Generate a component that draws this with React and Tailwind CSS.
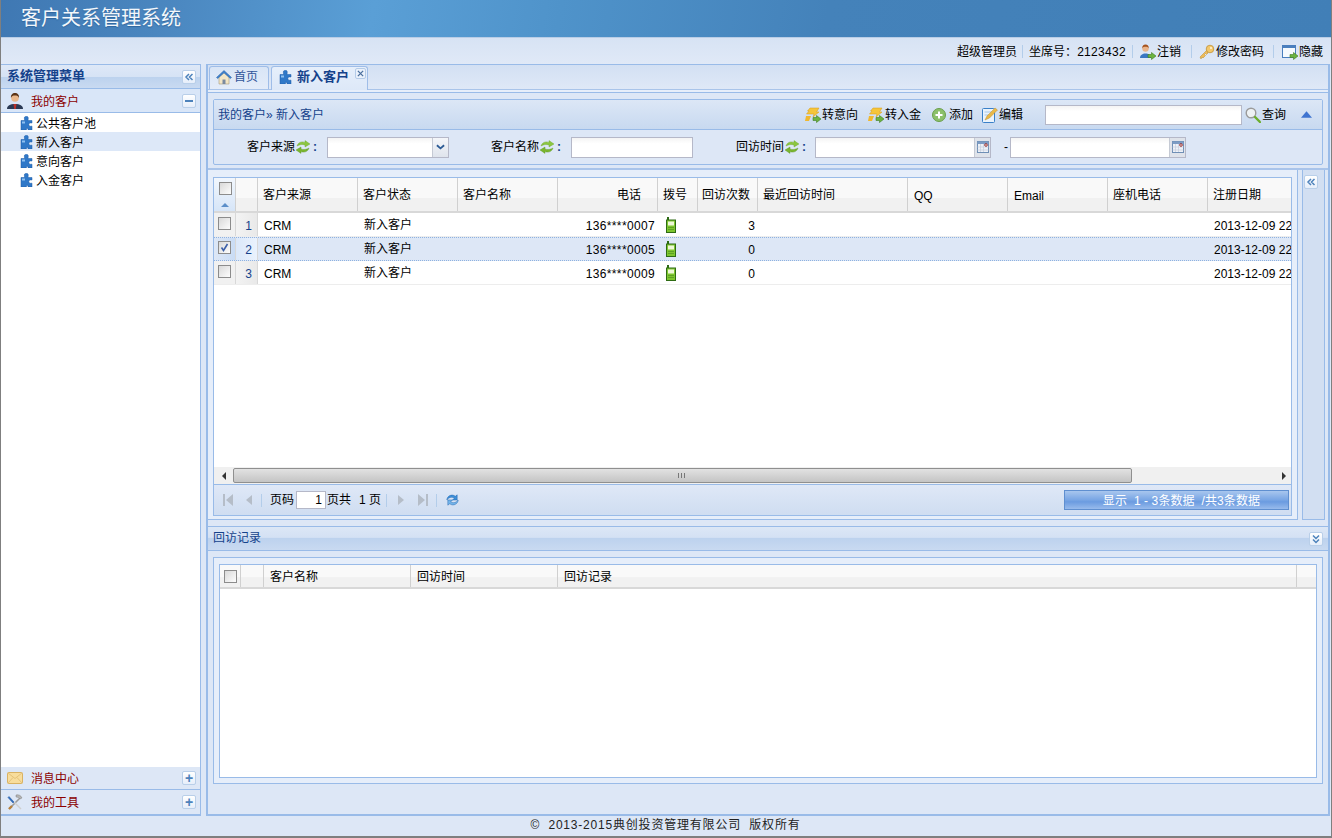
import React from 'react';

const columns = [
    { label: '客户来源', width: 'w-[100px]' },
    { label: '客户状态', width: 'w-[100px]' },
    { label: '客户名称', width: 'w-[100px]' },
    { label: '电话', width: 'w-[100px]', head: 'justify-end pr-[16px]' },
    { label: '拨号', width: 'w-[40px]' },
    { label: '回访次数', width: 'w-[60px]', head: 'pl-[4px]' },
    { label: '最近回访时间', width: 'w-[150px]' },
    { label: 'QQ', width: 'w-[100px]', head: 'pl-[6px] pt-[2px]' },
    { label: 'Email', width: 'w-[100px]', head: 'pl-[6px] pt-[2px]' },
    { label: '座机电话', width: 'w-[100px]' },
    { label: '注册日期', width: 'w-[100px]' },
];

const rows = [
    { no: 1, phone: '136****0007', visits: 3 },
    { no: 2, phone: '136****0005', visits: 0, selected: true },
    { no: 3, phone: '136****0009', visits: 0 },
];

const menuItems = [
    { label: '公共客户池' },
    { label: '新入客户', active: true },
    { label: '意向客户' },
    { label: '入金客户' },
];

const Puzzle = ({ className = 'w-[14px] h-[14px]' }) => (
    <svg viewBox="0 0 14 14" className={`shrink-0 ${className}`}>
        <path d="M1 4.500h3.500V3a2 2 0 1 1 3.600 0v1.500H12V7h-.9a1.700 1.700 0 1 0 0 3.200h.9V14H8v-1.600H6.400V14H1z" fill="#2f78c8" stroke="#1c5aa6" strokeWidth=".5" />
        <path d="M2 5.500h3v2H2z" fill="#8fc0f0" />
    </svg>
);

const Swap = () => (
    <svg viewBox="0 0 16 16" className="w-[16px] h-[16px] shrink-0">
        <path d="M2 7c1-3.500 4.500-5 8-3.600V1.600L15 5l-5 3V6C7.500 5 4.500 5.500 2 7z" fill="#8cc63f" stroke="#6aa52a" strokeWidth=".4" />
        <path d="M14 9c-1 3.500-4.500 5-8 3.600v1.800L1 11l5-3v2c2.500 1 5.500.5 8-1z" fill="#7ab52e" stroke="#5c9420" strokeWidth=".4" />
    </svg>
);

const BlueRefresh = () => (
    <svg viewBox="0 0 16 16" className="w-[15px] h-[16px] shrink-0">
        <path d="M2 8c0-4 5-7 9-4l2-1.500V8H8l2-2C7.500 4.500 4 5 2 8z" fill="#3d8fd8" stroke="#1e63ad" strokeWidth=".5" />
        <path d="M14 8c0 4-5 7-9 4l-2 1.500V8h5l-2 2c2.500 1.500 6 1 8-2z" fill="#74b5ea" stroke="#1e63ad" strokeWidth=".5" />
    </svg>
);

const GreenArrow = () => (
    <path d="M8 10.500h3.500V8.500L16 12l-4.500 3.500v-2H8z" fill="#6cb33f" stroke="#3f7d22" strokeWidth=".6" />
);

const Bolt = () => (
    <svg viewBox="0 0 16 16" className="w-[16px] h-[16px] shrink-0">
        <path d="M5 1h9l-2.500 4H14l-6 5 1-3H1.500L4 4H2.500z" fill="#f5c53a" stroke="#d99a16" strokeWidth=".5" />
        <path d="M1 9h5l-2 5H0z" fill="#f0b82e" />
        <GreenArrow />
    </svg>
);

const AddIcon = () => (
    <svg viewBox="0 0 14 14" className="w-[14px] h-[14px] shrink-0">
        <circle cx="7" cy="7" r="6.500" fill="#8cc06a" stroke="#6a9e4a" />
        <path d="M7 3.500v7M3.500 7h7" stroke="#fff" strokeWidth="2" />
    </svg>
);

const EditIcon = () => (
    <svg viewBox="0 0 16 16" className="w-[16px] h-[16px] shrink-0">
        <rect x=".5" y="1.500" width="12" height="14" rx="1" fill="#eaf3fc" stroke="#3a80c8" />
        <path d="M2.500 5h7M2.500 8h5" stroke="#a8c8e8" />
        <path d="M3 13l2-4 8-8 2.500 2-8 8z" fill="#e9b949" stroke="#b08224" strokeWidth=".4" />
    </svg>
);

const SearchIcon = () => (
    <svg viewBox="0 0 16 16" className="w-[16px] h-[16px] shrink-0">
        <circle cx="6" cy="6" r="4.800" fill="#eef2f4" stroke="#9a9a9a" strokeWidth="1.400" />
        <path d="M10 10l5 5" stroke="#6cae2c" strokeWidth="2.400" strokeLinecap="round" />
    </svg>
);

const CalendarIcon = () => (
    <svg viewBox="0 0 12 12" className="w-[12px] h-[12px]">
        <rect x=".5" y=".5" width="11" height="11" fill="#eef2f8" stroke="#6f8fb5" />
        <path d="M.5 .5h11v2.500H.5z" fill="#7d9cc4" />
        <path d="M3.500 3v8M6.500 3v8M.5 6h11M.5 9h11" stroke="#c6cfdc" strokeWidth=".7" />
        <circle cx="9" cy="4" r="1.300" fill="#fff" stroke="#8b1414" strokeWidth=".9" />
    </svg>
);

const PhoneIcon = () => (
    <svg viewBox="0 0 10 16" className="w-[10px] h-[16px] shrink-0">
        <path d="M1 0h2v3H1z" fill="#2c6a14" />
        <rect x=".5" y="3" width="9" height="12.500" fill="#7ec62e" stroke="#2e6b14" />
        <rect x="2" y="4.500" width="6" height="4" fill="#eef7d8" />
        <path d="M2.500 10.500h5M2.500 12.500h5" stroke="#3e7d1a" strokeDasharray="1 1" />
    </svg>
);

const HomeIcon = () => (
    <svg viewBox="0 0 16 16" className="w-[16px] h-[16px] shrink-0">
        <path d="M3 8v7h10V8L8 3.500z" fill="#f3e6c6" stroke="#a89a78" strokeWidth=".6" />
        <path d="M6.500 15v-4.500h3V15z" fill="#7a8aa0" />
        <path d="M.5 8.500L8 1.500l7.500 7-1.200 1L8 3.800 1.700 9.500z" fill="#3f82cf" stroke="#235c9f" strokeWidth=".5" />
    </svg>
);

const Avatar = () => (
    <svg viewBox="0 0 16 16" className="w-[16px] h-[16px] shrink-0">
        <path d="M0 16c0-3.500 3-5 8-5s8 1.500 8 5z" fill="#2b3a55" />
        <path d="M6.500 11h3L8.800 16H7.200z" fill="#b8322a" />
        <circle cx="8" cy="5" r="3.800" fill="#eab88c" />
        <path d="M4 5c-.5-3 1.500-5 4-5s4.500 2 4 5c-.5-2-2-2.500-4-2.500S4.500 3 4 5z" fill="#5b3316" />
    </svg>
);

const MailIcon = () => (
    <svg viewBox="0 0 16 12" className="w-[16px] h-[12px] shrink-0">
        <rect x=".5" y=".5" width="15" height="11" rx="1" fill="#f8dd9c" stroke="#d9b263" />
        <path d="M1 1l7 5.500L15 1M1 11l5-5.500M15 11l-5-5.500" fill="none" stroke="#e4c27a" />
    </svg>
);

const ToolsIcon = () => (
    <svg viewBox="0 0 16 16" className="w-[16px] h-[16px] shrink-0">
        <path d="M2 15L14 3" stroke="#9a9a9a" strokeWidth="1.600" />
        <path d="M9 1c2-.8 5 .2 6 3l-2 1-1.500-1.500L9 3z" fill="#b4b4b4" stroke="#777" strokeWidth=".4" />
        <path d="M14 15L7 8" stroke="#cfcfcf" strokeWidth="1.400" />
        <path d="M7 8L2 2.500 1 3.500 6 9z" fill="#2f6fc4" stroke="#1d4f95" strokeWidth=".5" />
        <path d="M2 15l3-3" stroke="#b9823d" strokeWidth="2.400" />
    </svg>
);

const KeyIcon = () => (
    <svg viewBox="0 0 16 16" className="w-[16px] h-[16px] shrink-0">
        <path d="M1 13l7-7 1 1-1 1 1 1-1.500 1.500-1-1-1 1 1 1L4 14l-1-1-1 2z" fill="#eebb58" stroke="#b98a2e" strokeWidth=".5" />
        <circle cx="11" cy="5" r="3.800" fill="#f3c86c" stroke="#b98a2e" strokeWidth=".7" />
        <circle cx="12" cy="4" r="1" fill="#fff6dc" />
    </svg>
);

const LogoutIcon = () => (
    <svg viewBox="0 0 16 16" className="w-[16px] h-[16px] shrink-0">
        <path d="M0 14c0-3 2.500-4.500 5.500-4.500S11 11 11 14z" fill="#3a76c2" />
        <circle cx="5.500" cy="4.500" r="3.200" fill="#e9b48a" />
        <path d="M2.300 4.500C2 2 3.500.5 5.500.5s3.500 1.500 3.200 4C8 3 7 2.800 5.500 2.800S3 3 2.300 4.500z" fill="#a5521c" />
        <GreenArrow />
    </svg>
);

const HideIcon = () => (
    <svg viewBox="0 0 16 16" className="w-[16px] h-[16px] shrink-0">
        <rect x=".5" y="1.500" width="13" height="12" fill="#f6fafe" stroke="#4a7fbe" />
        <path d="M.5 1.500h13V4H.5z" fill="#4a7fbe" />
        <GreenArrow />
    </svg>
);

const Sep = ({ className = 'mx-[6px]' }) => <span className={`w-px h-[13px] bg-[#b3cdea] shrink-0 ${className}`}></span>;

const BoxButton = ({ children }) => (
    <span className="flex items-center justify-center w-[14px] h-[14px] rounded-[2px] border border-[#b9cfe9] bg-[linear-gradient(#ffffff,#e6eefa)] text-[#4d82bb]">
        {children}
    </span>
);

const Chevrons = ({ down }) => (
    <svg viewBox="0 0 10 10" className="w-[10px] h-[10px]">
        {down
            ? <path d="M2 1.500l3 3 3-3M2 5.500l3 3 3-3" fill="none" stroke="currentColor" strokeWidth="1.500" />
            : <path d="M5 2L2 5l3 3M8.500 2l-3 3 3 3" fill="none" stroke="currentColor" strokeWidth="1.500" />}
    </svg>
);

const Check = ({ checked }) => (
    <span className="flex items-center justify-center w-[13px] h-[13px] border border-[#8c8c8c] bg-[linear-gradient(135deg,#d9d9d9,#fdfdfd)] shrink-0">
        {checked && (
            <svg viewBox="0 0 11 11" className="w-[11px] h-[11px]">
                <path d="M2.500 5.500l2 3 4-6.500" fill="none" stroke="#3b5fa8" strokeWidth="1.600" />
            </svg>
        )}
    </span>
);

const PagerArrow = ({ dir, bar }) => (
    <svg viewBox="0 0 10 12" className="w-[10px] h-[12px] shrink-0">
        {dir === 'left'
            ? <path d={bar ? 'M0 0h2v12H0zM10 0v12L3 6z' : 'M8 1v10L2 6z'} fill="#b5bdc8" />
            : <path d={bar ? 'M8 0h2v12H8zM0 0v12L7 6z' : 'M2 1v10l6-5z'} fill="#b5bdc8" />}
    </svg>
);

const FormLabel = ({ text, className }) => (
    <span className={`flex items-center ${className}`}>
        <span>{text}</span>
        <Swap />
        <span className="ml-[2px] text-[#15428b] font-bold">:</span>
    </span>
);

const CalendarInput = () => (
    <div className="flex h-[21px] w-[176px] border border-[#b5b8c8] bg-[linear-gradient(#f4f4f4,#ffffff_30%)]">
        <span className="flex-1"></span>
        <span className="flex items-center justify-center w-[16px] bg-[#dfe3ea] border-l border-[#c5cad4]">
            <CalendarIcon />
        </span>
    </div>
);

const ToolAction = ({ icon, label, className = 'gap-px' }) => (
    <span className={`flex items-center ${className}`}>
        {icon}
        <span>{label}</span>
    </span>
);

const GridHeaderCell = ({ className = '', children }) => (
    <div className={`flex items-center h-full border-r border-[#d0d0d0] shrink-0 ${className}`}>{children}</div>
);

const AccordionLabel = ({ icon, label }) => (
    <span className="flex items-center gap-[8px] text-[#8b0000]">
        {icon}
        <span className="pt-[2px]">{label}</span>
    </span>
);

export default function App() {
    return (
        <div className="w-[1332px] h-[838px] flex flex-col overflow-hidden bg-[#dde7f6] text-[12px] text-black font-['Liberation_Sans','Noto_Sans_CJK_SC',sans-serif] border-x border-[#7f7f7f]">
            {/* topo */}
            <div className="h-[37px] shrink-0 flex items-center pl-[21px] pb-[2px] -mx-px bg-[linear-gradient(100deg,#3f78b3_0%,#4a86bf_12%,#5a9fd6_28%,#4f93ca_42%,#4482ba_62%,#417fb7_100%)]">
                <span className="text-[20px] text-[#f3f7fb] [text-shadow:0_1px_1px_#2f659c]">客户关系管理系统</span>
            </div>
            <div className="h-px shrink-0 bg-[#b9cde6]"></div>

            <div className="h-[26px] shrink-0 flex items-center justify-end pr-[8px] pt-[1px] bg-[linear-gradient(#d7e3f4,#e0e9f7)]">
                <span>超级管理员</span>
                <Sep className="ml-[5px] mr-[6px]" />
                <span>坐席号：<span className="tracking-[0.3px]">2123432</span></span>
                <Sep className="ml-[6px] mr-[7px]" />
                <ToolAction icon={<LogoutIcon />} label="注销" />
                <Sep className="ml-[10px] mr-[7px]" />
                <ToolAction icon={<KeyIcon />} label="修改密码" />
                <Sep className="ml-[9px] mr-[8px]" />
                <ToolAction icon={<HideIcon />} label="隐藏" />
            </div>

            <div className="h-[752px] shrink-0 flex">
                {/* menu lateral */}
                <aside className="w-[200px] shrink-0 flex flex-col border border-[#99bbe8] border-l-0 border-b-2 bg-white">
                    <div className="h-[24px] shrink-0 flex items-center justify-between pl-[6px] pr-[4px] border-b border-[#99bbe8] bg-[linear-gradient(#dee8f7_0%,#d6e3f5_50%,#bcd2ee_52%,#c9daf1_100%)]">
                        <span className="pb-[2px] text-[13px] font-bold text-[#15428b]">系统管理菜单</span>
                        <BoxButton><Chevrons /></BoxButton>
                    </div>
                    <div className="h-[24px] shrink-0 flex items-center justify-between pl-[6px] pr-[4px] border-b border-[#99bbe8] bg-[#d9e6f8]">
                        <AccordionLabel icon={<Avatar />} label="我的客户" />
                        <BoxButton><span className="w-[8px] h-[2px] bg-[#4d82bb]"></span></BoxButton>
                    </div>
                    <ul className="flex-1">
                        {menuItems.map((item) => (
                            <li key={item.label} className={`h-[19px] flex items-center gap-[2px] pl-[19px] ${item.active ? 'bg-[#dde8f8]' : ''}`}>
                                <Puzzle />
                                <span className="pt-[3px]">{item.label}</span>
                            </li>
                        ))}
                    </ul>
                    <div className="h-[23px] shrink-0 flex items-center justify-between pl-[6px] pr-[4px] border-b border-[#99bbe8] bg-[#dde7f6]">
                        <AccordionLabel icon={<MailIcon />} label="消息中心" />
                        <BoxButton><span className="text-[14px] leading-none font-bold">+</span></BoxButton>
                    </div>
                    <div className="h-[24px] shrink-0 flex items-center justify-between pl-[6px] pr-[4px] bg-[#dde7f6]">
                        <AccordionLabel icon={<ToolsIcon />} label="我的工具" />
                        <BoxButton><span className="text-[14px] leading-none font-bold">+</span></BoxButton>
                    </div>
                </aside>

                {/* area principal */}
                <main className="w-[1124px] ml-[5px] shrink-0 flex flex-col border border-[#99bbe8] border-b-2 border-r-2 border-l-2 bg-[#dde7f6]">
                    <div className="h-[25px] shrink-0 flex items-end pl-[1px] gap-[2px] border-b border-[#a9c4ea] bg-[linear-gradient(#d3e0f3,#dfe8f7)]">
                        <div className="w-[60px] h-[23px] flex items-center gap-[2px] pl-[6px] pb-[2px] rounded-t-[3px] border border-b-0 border-[#9fbde8] bg-[linear-gradient(#d9e5f6,#e4ecf9)] text-[#30559a]">
                            <HomeIcon />
                            <span>首页</span>
                        </div>
                        <div className="relative w-[97px] h-[24px] -mb-px flex items-center gap-[4px] pl-[7px] pb-[3px] rounded-t-[3px] border border-b-0 border-[#9fbde8] bg-[linear-gradient(#e6effb,#dde8f8)] text-[13px] font-bold text-[#15428b]">
                            <Puzzle />
                            <span>新入客户</span>
                            <span className="absolute right-[1px] top-[1px] flex items-center justify-center w-[11px] h-[11px] rounded-[2px] border border-[#b4cbe8] bg-[#eaf1fb]">
                                <svg viewBox="0 0 8 8" className="w-[7px] h-[7px]"><path d="M1 1l6 6M7 1L1 7" stroke="#4a6f9e" strokeWidth="1.500" /></svg>
                            </span>
                        </div>
                    </div>
                    <div className="h-[3px] shrink-0 border-b border-[#99bbe8] bg-[#e6eefa]"></div>

                    {/* pesquisa */}
                    <div className="h-[77px] shrink-0 pt-[6px] px-[5px] pb-[2px] border-b-2 border-[#a9c4ea]">
                        <div className="h-[66px] w-[1110px] flex flex-col rounded-[2px] border border-[#99bbe8] bg-[#dde7f6]">
                            <div className="h-[30px] shrink-0 flex items-center pl-[4px] border-b border-[#99bbe8] bg-[linear-gradient(#dce7f6,#c8d9f0)]">
                                <span className="text-[#15428b]">我的客户» 新入客户</span>
                                <ToolAction icon={<Bolt />} label="转意向" className="ml-[481px] gap-px" />
                                <ToolAction icon={<Bolt />} label="转入金" className="ml-[10px] gap-px" />
                                <ToolAction icon={<AddIcon />} label="添加" className="ml-[11px] gap-[3px]" />
                                <ToolAction icon={<EditIcon />} label="编辑" className="ml-[9px] gap-px" />
                                <span className="ml-[22px] w-[197px] h-[20px] border border-[#b5b8c8] bg-[linear-gradient(#f4f4f4,#ffffff_30%)]"></span>
                                <ToolAction icon={<SearchIcon />} label="查询" className="ml-[3px] gap-px" />
                                <svg viewBox="0 0 12 7" className="ml-[15px] w-[11px] h-[7px]"><path d="M6 0l6 7H0z" fill="#3f74d0" /></svg>
                            </div>
                            <div className="flex-1 flex items-center">
                                <FormLabel text="客户来源" className="ml-[33px] w-[80px]" />
                                <div className="flex h-[21px] w-[122px] border border-[#b5b8c8] bg-[linear-gradient(#f4f4f4,#ffffff_30%)]">
                                    <span className="flex-1"></span>
                                    <span className="flex items-center justify-center w-[16px] bg-[linear-gradient(#f4f6fa,#dfe4ec)] border-l border-[#c5cad4]">
                                        <svg viewBox="0 0 10 6" className="w-[9px] h-[6px]"><path d="M1 1l4 3.500L9 1" fill="none" stroke="#2b5a94" strokeWidth="2" /></svg>
                                    </span>
                                </div>
                                <FormLabel text="客户名称" className="ml-[42px] w-[80px]" />
                                <span className="w-[122px] h-[21px] border border-[#b5b8c8] bg-[linear-gradient(#f4f4f4,#ffffff_30%)]"></span>
                                <FormLabel text="回访时间" className="ml-[43px] w-[79px]" />
                                <CalendarInput />
                                <span className="ml-[13px] w-[6px]">-</span>
                                <CalendarInput />
                            </div>
                        </div>
                    </div>

                    {/* grid + barra lateral */}
                    <div className="h-[350px] shrink-0 flex">
                        <div className="w-[1090px] h-[350px] shrink-0 pt-[7px] px-[5px] pb-[3px] border-r border-b border-[#99bbe8] bg-[#e6eefa]">
                            <div className="h-[339px] w-[1079px] flex flex-col border border-[#99bbe8] bg-white overflow-hidden">
                                <div className="h-[35px] shrink-0 flex border-b-2 border-[#d8d8d8] bg-[linear-gradient(#f9f9f9_0%,#f9f9f9_60%,#f1f1f1_62%,#f1f1f1_100%)] overflow-hidden">
                                    <div className="w-[22px] h-full shrink-0 flex flex-col items-center justify-between pt-[4px] pb-[4px] pl-px border-r border-[#d0d0d0] bg-[linear-gradient(#f2f7fd,#d6e5f8)]">
                                        <Check />
                                        <svg viewBox="0 0 8 4" className="w-[8px] h-[4px]"><path d="M4 0l4 4H0z" fill="#5b8ec9" /></svg>
                                    </div>
                                    <GridHeaderCell className="w-[22px]" />
                                    {columns.map((col) => (
                                        <GridHeaderCell key={col.label} className={`${col.width} ${col.head ?? 'pl-[5px]'}`}>
                                            {col.label}
                                        </GridHeaderCell>
                                    ))}
                                </div>
                                <div className="flex-1 min-h-0">
                                    {rows.map((row) => (
                                        <div
                                            key={row.no}
                                            className={`h-[24px] flex items-center overflow-hidden ${row.selected ? 'bg-[#dde7f6] border-y border-dotted border-[#8fb2e0]' : 'border-b border-[#ededed]'}`}
                                        >
                                            <span className={`w-[22px] h-full shrink-0 flex items-start justify-center border-r border-[#d8d8d8] ${row.selected ? 'pt-[3px] bg-[linear-gradient(90deg,#dde7f6,#c9dcf5)]' : 'pt-[4px] bg-[#f1f1f1]'}`}>
                                                <Check checked={row.selected} />
                                            </span>
                                            <span className={`w-[22px] h-full shrink-0 flex items-center justify-center pl-[4px] pt-[2px] border-r border-[#d8d8d8] text-[#15428b] ${row.selected ? 'bg-[linear-gradient(90deg,#dbe8fa,#eaf2fd)]' : 'bg-[linear-gradient(90deg,#f3f3f3,#e9e9e9)]'}`}>
                                                {row.no}
                                            </span>
                                            <span className="w-[100px] shrink-0 pl-[6px] pt-[2px]">CRM</span>
                                            <span className="w-[100px] shrink-0 pl-[6px]">新入客户</span>
                                            <span className="w-[100px] shrink-0"></span>
                                            <span className="w-[100px] shrink-0 pr-[3px] pt-[2px] text-right tracking-[0.35px]">{row.phone}</span>
                                            <span className="w-[40px] shrink-0 pl-[8px]"><PhoneIcon /></span>
                                            <span className="w-[60px] shrink-0 pr-[3px] pt-[2px] text-right">{row.visits}</span>
                                            <span className="w-[150px] shrink-0"></span>
                                            <span className="w-[100px] shrink-0"></span>
                                            <span className="w-[100px] shrink-0"></span>
                                            <span className="w-[100px] shrink-0"></span>
                                            <span className="w-[100px] shrink-0 pl-[6px] pt-[2px] whitespace-nowrap">2013-12-09 22:10:31</span>
                                        </div>
                                    ))}
                                </div>
                                {/* scroll */}
                                <div className="h-[17px] shrink-0 flex items-center bg-[#f0f0f0]">
                                    <span className="w-[19px] flex justify-center">
                                        <svg viewBox="0 0 4 8" className="w-[4px] h-[8px]"><path d="M4 0v8L0 4z" fill="#333" /></svg>
                                    </span>
                                    <span className="relative w-[899px] h-[15px] rounded-[2px] border border-[#8f8f8f] bg-[linear-gradient(#e2e2e2,#c4c4c4)]">
                                        <span className="absolute left-[444px] top-[4px] w-[8px] h-[5px] bg-[repeating-linear-gradient(90deg,#777_0,#777_1px,transparent_1px,transparent_3px)]"></span>
                                    </span>
                                    <span className="flex-1 flex justify-end pr-[5px]">
                                        <svg viewBox="0 0 4 8" className="w-[4px] h-[8px]"><path d="M0 0v8l4-4z" fill="#333" /></svg>
                                    </span>
                                </div>
                                {/* paginacao */}
                                <div className="h-[31px] shrink-0 flex items-center pl-[9px] border-t border-[#99bbe8] bg-[linear-gradient(#dfe8f7,#cfddf1)]">
                                    <PagerArrow dir="left" bar />
                                    <span className="ml-[11px]"><PagerArrow dir="left" /></span>
                                    <Sep className="ml-[7px] mr-[8px]" />
                                    <span>页码</span>
                                    <span className="ml-[2px] w-[30px] h-[18px] pr-[3px] flex items-center justify-end border border-[#b5b8c8] bg-white">1</span>
                                    <span className="ml-px">页共</span>
                                    <span className="ml-[8px]">1 页</span>
                                    <Sep className="ml-[5px] mr-[9px]" />
                                    <PagerArrow dir="right" />
                                    <span className="ml-[12px]"><PagerArrow dir="right" bar /></span>
                                    <Sep className="ml-[8px] mr-[8px]" />
                                    <BlueRefresh />
                                    <span className="ml-auto mr-[2px] w-[225px] h-[20px] pl-[10px] pt-[2px] flex items-center justify-center border border-[#5f8fd0] bg-[linear-gradient(#a8c6ee_0%,#78a5e4_50%,#6b9be0_60%,#98bbec_100%)] text-white tracking-[0.1px]">
                                        显示&nbsp;&nbsp;1 - 3条数据&nbsp;&nbsp;/共3条数据
                                    </span>
                                </div>
                            </div>
                        </div>
                        <div className="ml-[4px] w-[23px] h-[350px] shrink-0 flex justify-start pl-[1px] pt-[5px] border-x border-b border-[#99bbe8] bg-[#d2dff2]">
                            <BoxButton><Chevrons /></BoxButton>
                        </div>
                    </div>

                    {/* historico */}
                    <div className="h-[6px] shrink-0"></div>
                    <div className="flex-1 min-h-0 flex flex-col border-t border-[#99bbe8] bg-[#dde7f6]">
                        <div className="h-[24px] shrink-0 flex items-center justify-between pl-[5px] pr-[5px] border-b border-[#99bbe8] bg-[linear-gradient(#dce7f6_0%,#d4e1f4_45%,#bdd2ee_50%,#c9daf1_100%)]">
                            <span className="pb-[2px] text-[#15428b]">回访记录</span>
                            <BoxButton><Chevrons down /></BoxButton>
                        </div>
                        <div className="pt-[6px] px-[5px]">
                            <div className="w-[1110px] h-[227px] pt-[6px] px-[5px] pb-[5px] border border-[#99bbe8] bg-[#e6eefa]">
                                <div className="h-[214px] flex flex-col border border-[#99bbe8] bg-white">
                                    <div className="h-[24px] shrink-0 flex border-b-2 border-[#d8d8d8] bg-[linear-gradient(#f9f9f9_0%,#f9f9f9_55%,#f1f1f1_57%,#f1f1f1_100%)]">
                                        <GridHeaderCell className="w-[21px] justify-center pl-px"><Check /></GridHeaderCell>
                                        <GridHeaderCell className="w-[23px]" />
                                        <GridHeaderCell className="w-[147px] pl-[6px] pt-px">客户名称</GridHeaderCell>
                                        <GridHeaderCell className="w-[147px] pl-[6px] pt-px">回访时间</GridHeaderCell>
                                        <GridHeaderCell className="w-[739px] pl-[6px] pt-px">回访记录</GridHeaderCell>
                                    </div>
                                </div>
                            </div>
                        </div>
                    </div>
                </main>
            </div>

            {/* rodape */}
            <div className="h-[20px] shrink-0 flex items-center justify-center pb-[3px] text-[#222] tracking-[0.8px]">
                <span className="ml-[-1px]">©&nbsp;&nbsp;2013-2015典创投资管理有限公司&nbsp;&nbsp;版权所有</span>
            </div>
            <div className="h-[2px] shrink-0 -mx-px bg-[#7f7f7f]"></div>
        </div>
    );
}
